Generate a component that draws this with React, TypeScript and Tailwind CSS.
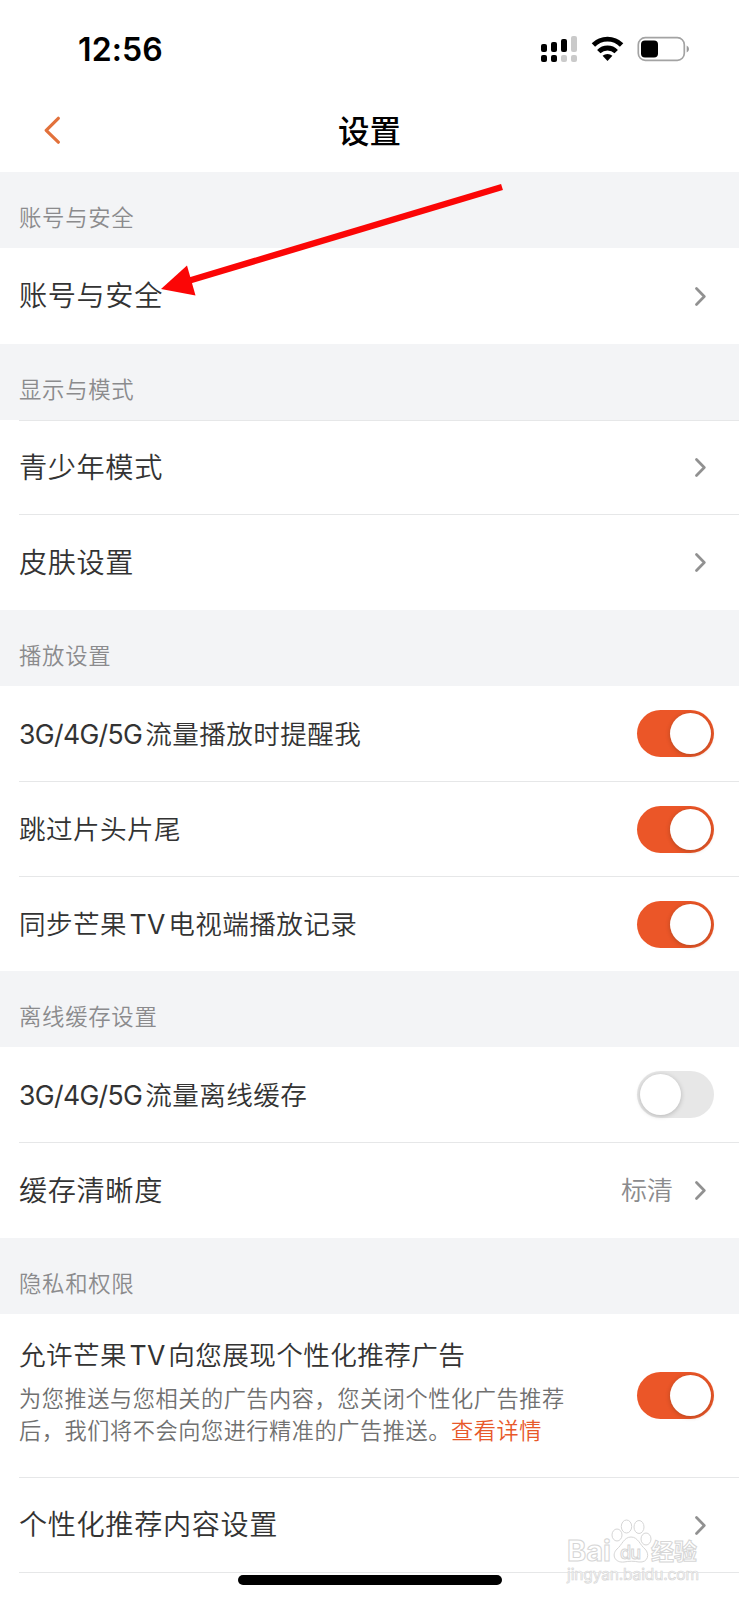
import React, { useState } from "react";

const Chevron: React.FC = () => (
  <svg className="h-[19px] w-[11px] shrink-0" viewBox="0 0 11 19" fill="none">
    <path
      d="M1.5 1.5 L9.3 9.5 L1.5 17.5"
      stroke="#919191"
      strokeWidth="2.7"
      strokeLinecap="round"
      strokeLinejoin="round"
    />
  </svg>
);

const Toggle: React.FC<{ initial: boolean }> = ({ initial }) => {
  const [on, setOn] = useState(initial);
  return (
    <button
      onClick={() => setOn(!on)}
      className={`flex h-[47px] w-[77px] shrink-0 items-center rounded-full px-[3px] ${
        on ? "justify-end bg-[#eb5628]" : "justify-start bg-[#e7e7e7]"
      }`}
    >
      <span
        className={`size-[41px] rounded-full bg-white ${
          on
            ? "shadow-[0_1px_4px_rgba(110,50,20,0.45)]"
            : "shadow-[0_1px_5px_rgba(0,0,0,0.22)]"
        }`}
      />
    </button>
  );
};

// Latin runs sit slightly apart from the Chinese text around them
const Latin: React.FC<{ children: string; className?: string }> = ({
  children,
  className = "",
}) => <span className={`font-normal ${className}`}>{children}</span>;

const SectionTitle: React.FC<{ children: string }> = ({ children }) => (
  <h2 className="flex h-[76px] items-center bg-[#f3f4f6] pt-4 pl-[19px] text-[22.4px] leading-8 tracking-[0.7px] text-[#8b8b8d]">
    {children}
  </h2>
);

interface RowProps {
  label: React.ReactNode;
  value?: string;
  toggle?: boolean;
  height?: string;
  line?: boolean;
}

const Row: React.FC<RowProps> = ({
  label,
  value,
  toggle,
  height = "h-[95px]",
  line = false,
}) => (
  <div className={`pl-[19px] ${height}`}>
    <div
      className={`flex h-full items-center justify-between border-[#e6e7e8] ${
        line ? "border-t" : ""
      } ${toggle === undefined ? "pr-[33px]" : "pr-[25px]"}`}
    >
      <span
        className={
          toggle === undefined
            ? "text-[28.2px] leading-10 tracking-[0.6px]"
            : "text-[26.6px] leading-10 tracking-[0.4px]"
        }
      >
        {label}
      </span>
      {toggle === undefined ? (
        <span className="flex items-center gap-[22px] text-[26px] leading-10 text-[#8b8b8d]">
          {value}
          <Chevron />
        </span>
      ) : (
        <Toggle initial={toggle} />
      )}
    </div>
  </div>
);

const StatusBar: React.FC = () => (
  <div className="flex h-[88px] items-start justify-between pt-[30px] pr-[50px] pl-[78px] text-black">
    <span className="text-[32px] leading-10 font-semibold tracking-[0.1px]">
      12:56
    </span>
    <svg className="mt-[5px] h-[28px] w-[149px]" viewBox="540 35 149 28">
      <g fill="#000">
        <rect x="541" y="44" width="6" height="8" rx="2" />
        <rect x="551" y="42" width="6" height="10" rx="2" />
        <rect x="561" y="39" width="6" height="13" rx="2" />
        <rect x="541" y="55" width="6" height="7" rx="2" />
        <rect x="551" y="55" width="6" height="7" rx="2" />
      </g>
      <g fill="#cacaca">
        <rect x="571" y="36" width="6" height="16" rx="2" />
        <rect x="561" y="55" width="6" height="7" rx="2" />
        <rect x="571" y="55" width="6" height="7" rx="2" />
      </g>
      <g fill="none" stroke="#000" strokeWidth="4.8">
        <path d="M593.4 45 A20 20 0 0 1 621.6 45" />
        <path d="M598.8 51.6 A12.3 12.3 0 0 1 616.2 51.6" />
      </g>
      <path d="M602.6 55.8 A7.5 7.5 0 0 1 612.4 55.8 L607.5 61 Z" fill="#000" />
      <rect
        x="638.3"
        y="37.7"
        width="46"
        height="22.6"
        rx="7"
        fill="none"
        stroke="#a3a3a3"
        strokeWidth="1.7"
      />
      <rect x="641" y="40.5" width="17" height="17" rx="4" fill="#000" />
      <path d="M686.7 45.5 Q689 46.5 689 49 Q689 51.5 686.7 52.5 Z" fill="#999" />
    </svg>
  </div>
);

const Watermark: React.FC = () => (
  <svg
    className="absolute top-[1515px] left-[560px] h-[75px] w-[145px]"
    viewBox="560 1515 145 75"
    fill="#fff"
    stroke="#d6d6d6"
    strokeWidth="1"
  >
    <ellipse cx="617" cy="1535" rx="5" ry="6" />
    <ellipse cx="626.5" cy="1526.5" rx="5.2" ry="6.5" />
    <ellipse cx="639" cy="1527" rx="5" ry="6.5" />
    <ellipse cx="646" cy="1539" rx="5" ry="6" />
    <path d="M631 1537 C624 1537 622 1545 617 1549 C611 1555 615 1563 624 1562 C629 1561 634 1561 639 1562 C648 1563 650 1554 645 1549 C640 1545 638 1537 631 1537 Z" />
    <text
      x="567"
      y="1561"
      fontSize="28"
      fontWeight="700"
      textLength="44"
      lengthAdjust="spacingAndGlyphs"
    >
      Bai
    </text>
    <text x="620" y="1559" fontSize="18" fontWeight="500" textLength="21">
      du
    </text>
    <text x="651" y="1560" fontSize="23" fontWeight="700" textLength="46">
      经验
    </text>
    <text
      x="567"
      y="1580"
      fontSize="15.5"
      fontWeight="400"
      textLength="132"
      strokeWidth="0.7"
    >
      jingyan.baidu.com
    </text>
  </svg>
);

const App: React.FC = () => {
  return (
    <div className="relative h-[1600px] w-[739px] overflow-hidden bg-white font-['Inter','Noto_Sans_CJK_SC',sans-serif] font-[350] text-[#333]">
      <StatusBar />

      <header className="grid h-[84px] grid-cols-[1fr_auto_1fr] items-center">
        <svg className="ml-[43px] h-[28px] w-[18px]" viewBox="0 0 18 28" fill="none">
          <path
            d="M15.3 2.3 L3.2 14.3 L15.3 26.2"
            stroke="#e2713b"
            strokeWidth="3.2"
            strokeLinecap="round"
            strokeLinejoin="round"
          />
        </svg>
        <h1 className="pt-1 text-[31.5px] leading-10 font-medium text-black">
          设置
        </h1>
      </header>

      <SectionTitle>账号与安全</SectionTitle>
      <Row label="账号与安全" height="h-24" />

      <SectionTitle>显示与模式</SectionTitle>
      <Row label="青少年模式" height="h-[94px]" line />
      <Row label="皮肤设置" height="h-24" line />

      <SectionTitle>播放设置</SectionTitle>
      <Row
        label={
          <>
            <Latin className="mr-[3px] tracking-[-0.65px]">3G/4G/5G</Latin>
            流量播放时提醒我
          </>
        }
        toggle={true}
      />
      <Row label="跳过片头片尾" toggle={true} line />
      <Row
        label={
          <>
            同步芒果<Latin className="mx-[2.5px]">TV</Latin>电视端播放记录
          </>
        }
        toggle={true}
        line
      />

      <SectionTitle>离线缓存设置</SectionTitle>
      <Row
        label={
          <>
            <Latin className="mr-[3px] tracking-[-0.65px]">3G/4G/5G</Latin>
            流量离线缓存
          </>
        }
        toggle={false}
      />
      <Row label="缓存清晰度" value="标清" height="h-24" line />

      <SectionTitle>隐私和权限</SectionTitle>
      <div className="flex h-[163px] items-center justify-between pr-[25px] pl-[19px]">
        <div className="pb-[9px]">
          <p className="text-[26.6px] leading-10 tracking-[0.4px]">
            允许芒果<Latin className="mx-[2.5px]">TV</Latin>
            向您展现个性化推荐广告
          </p>
          <p className="mt-2 text-[22.2px] leading-8 tracking-[0.55px] text-[#707070]">
            为您推送与您相关的广告内容，您关闭个性化广告推荐
            <br />
            后，我们将不会向您进行精准的广告推送。
            <a className="text-[#e8592b]">查看详情</a>
          </p>
        </div>
        <Toggle initial={true} />
      </div>
      <Row label="个性化推荐内容设置" line />
      <div className="ml-[19px] border-t border-[#e6e7e8]" />

      <svg
        className="absolute top-[175px] left-[150px] h-[130px] w-[365px]"
        viewBox="150 175 365 130"
      >
        <path d="M502 187 L188 281" stroke="#fb0606" strokeWidth="6.4" />
        <path d="M161 289 L187 265.5 L195.5 295.5 Z" fill="#fb0606" />
      </svg>

      <Watermark />

      <div className="absolute top-[1575px] left-[238px] h-[10px] w-[264px] rounded-full bg-black" />
    </div>
  );
};

export default App;
